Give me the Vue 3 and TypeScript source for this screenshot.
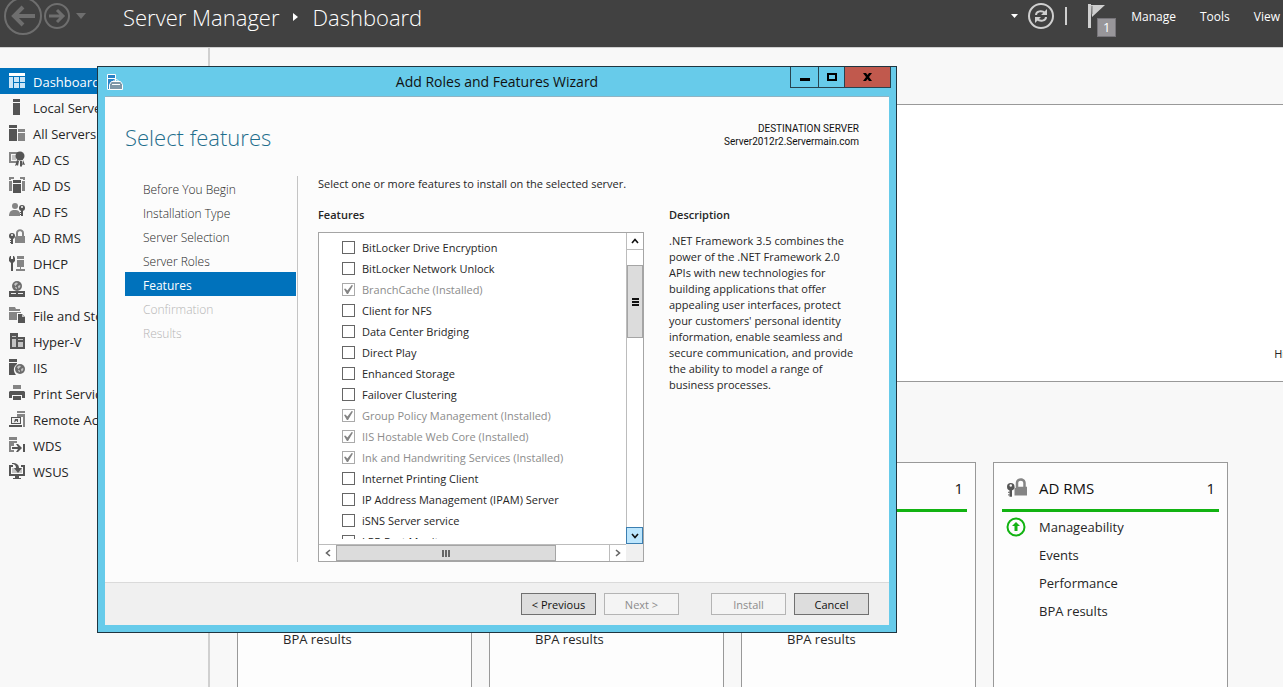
<script setup lang="ts">
import { ref } from 'vue'

type Shape = [path: string, fill: string]

const DARK = '#555555'
const MID = '#858585'
const SOFT = '#c4c4c4'
const BASE = '#f8f8f8'

const box = (x: number, y: number, w: number, h: number): string => `M${x} ${y}h${w}v${h}h${-w}z`
const disc = (cx: number, cy: number, r: number): string =>
  `M${cx - r} ${cy}a${r} ${r} 0 1 0 ${2 * r} 0a${r} ${r} 0 1 0 ${-2 * r} 0z`
const globe = (cx: number, cy: number, r: number): Shape[] => [
  [disc(cx, cy, r), '#6c6c6c'],
  [`M${cx - 3} ${cy - 2}l2-1.500 2 .5-1 1.500 -1 .5-.5 1.500z`, SOFT],
  [`M${cx + 1} ${cy}l2-1 .5 1-1 2-1 .5z`, SOFT],
  [`M${cx - 2} ${cy + 1}h1.500l.5 2-1 0z`, SOFT],
]
const key = (cx: number, cy: number): Shape[] => [
  [disc(cx, cy, 3), DARK],
  [box(cx - 1, cy, 2, 8), DARK],
  [box(cx - 2, cy + 4, 1, 1) + box(cx - 2, cy + 6, 1, 1), DARK],
  [disc(cx, cy - 1, 1), BASE],
]

const icons: Record<string, Shape[]> = {
  dashboard: [
    [box(0, 0, 16, 3), '#ffffff'],
    [box(0, 4, 4, 11) + box(5, 4, 5, 5) + box(11, 4, 5, 5) + box(5, 10, 5, 5) + box(11, 10, 5, 5), '#cbe5f7'],
  ],
  server: [[box(4, 0, 7, 3) + box(4, 4, 7, 12), DARK]],
  servers: [
    [box(0, 0, 8, 3) + box(0, 4, 8, 12), DARK],
    [box(9, 4, 7, 3) + box(9, 8, 7, 8), MID],
  ],
  adcs: [
    ['M0 1h9v2H2v7h6v2H0z', MID],
    [box(3, 4, 4, 5), SOFT],
    [disc(11, 5, 4.5), DARK],
    ['M8 9l2 1-1 5-1-1-2 1zM11 10h2v6l-1-1-1 1zM14 9l2 5-2-.5-1 1z', DARK],
  ],
  adds: [
    ['M0 0h5v2H2v1H0zM11 0h5v3h-2V2h-3zM0 4h3v10H0zM13 4h3v10h-3z', MID],
    [box(4, 3, 8, 3) + box(4, 7, 8, 9), DARK],
  ],
  adfs: [
    [disc(6, 3, 3), MID],
    ['M0 13c0-4 2-6 5-6h2c2 0 3 1 4 3v3z', MID],
    ...key(13, 5),
  ],
  adrms: [
    ['M7 8V4c0-5 8-5 8 0v3h1v7H6V7zM9 7h4V4c0-2.500-4-2.500-4 0z', MID],
    ...key(3, 7),
  ],
  dhcp: [
    ['M1 1l1 0v3h2V1h1l1 2v3L4 8v8H2V8L0 6V3z', DARK],
    [box(8, 1, 7, 3) + box(8, 5, 7, 7) + box(11, 12, 1, 2) + box(7, 14, 9, 2), MID],
  ],
  dns: [
    ...globe(8, 5, 5),
    [box(0, 10, 16, 6), DARK],
    [box(2, 12, 5, 1) + box(9, 12, 5, 1), '#eeeeee'],
  ],
  files: [
    ['M0 0h6l1 2h4v2H0zM0 5h12v1H8v7H0z', MID],
    ['M9 7h4l3 3v6H9z', DARK],
    ['M13 7v3h3z', SOFT],
  ],
  hyperv: [
    ['M1 0h8v4h7v12H1z', DARK],
    [box(3, 3, 4, 1) + box(3, 6, 4, 8) + box(9, 6, 5, 1) + box(9, 9, 5, 5), SOFT],
  ],
  iis: [
    [box(0, 0, 8, 3) + 'M0 4h8v1c-4 3-4 7-1 11H0z', DARK],
    ...globe(11, 10, 5),
  ],
  print: [
    [box(4, 0, 8, 4), MID],
    ['M1 6h14l1 1v6h-3v-3H3v3H0V7z', DARK],
    [box(4, 11, 8, 4), DARK],
  ],
  remote: [
    ['M8 0h8v2H8zM8 3h8v13h-2V6H8z', MID],
    ['M2 6h10v7H2zM0 14h13v2H0z', DARK],
    [box(3, 7, 8, 5), '#eeeeee'],
    ['M6 8h3v3H8V9.500l-3 2z', DARK],
  ],
  wds: [
    [box(0, 0, 8, 3) + 'M0 4h8v2H5v3H2v4h3v2H0z', MID],
    ['M3 10h6L7 7h2l4 4-4 4H7l2-3H3zM14 7h2v8h-2z', DARK],
  ],
  wsus: [
    ['M0 2h4v2H2v7h12V4h-2V2h4v11h-6v2h2v1H4v-1h2v-2H0z', DARK],
    [box(3, 5, 10, 5), SOFT],
    ['M3 0c5 0 7 2 7 5h3l-4 5-4-5h2c0-2-1-4-4-4z', DARK],
  ],
}

const sections = [
  { label: 'Dashboard', icon: 'dashboard' },
  { label: 'Local Server', icon: 'server' },
  { label: 'All Servers', icon: 'servers' },
  { label: 'AD CS', icon: 'adcs' },
  { label: 'AD DS', icon: 'adds' },
  { label: 'AD FS', icon: 'adfs' },
  { label: 'AD RMS', icon: 'adrms' },
  { label: 'DHCP', icon: 'dhcp' },
  { label: 'DNS', icon: 'dns' },
  { label: 'File and Storage Services', icon: 'files' },
  { label: 'Hyper-V', icon: 'hyperv' },
  { label: 'IIS', icon: 'iis' },
  { label: 'Print Services', icon: 'print' },
  { label: 'Remote Access', icon: 'remote' },
  { label: 'WDS', icon: 'wds' },
  { label: 'WSUS', icon: 'wsus' },
]

const fullRows = ['Manageability', 'Events', 'Services', 'Performance', 'BPA results']
const tiles = [
  { title: 'AD CS', icon: 'adcs', rows: fullRows },
  { title: 'AD DS', icon: 'adds', rows: fullRows },
  { title: 'AD FS', icon: 'adfs', rows: fullRows },
  { title: 'AD RMS', icon: 'adrms', rows: fullRows.filter((r) => r !== 'Services') },
]

const steps = [
  { label: 'Before You Begin', state: 'done' },
  { label: 'Installation Type', state: 'done' },
  { label: 'Server Selection', state: 'done' },
  { label: 'Server Roles', state: 'done' },
  { label: 'Features', state: 'current' },
  { label: 'Confirmation', state: 'pending' },
  { label: 'Results', state: 'pending' },
]

const features = ref([
  { label: 'BitLocker Drive Encryption', installed: false, checked: false },
  { label: 'BitLocker Network Unlock', installed: false, checked: false },
  { label: 'BranchCache (Installed)', installed: true, checked: true },
  { label: 'Client for NFS', installed: false, checked: false },
  { label: 'Data Center Bridging', installed: false, checked: false },
  { label: 'Direct Play', installed: false, checked: false },
  { label: 'Enhanced Storage', installed: false, checked: false },
  { label: 'Failover Clustering', installed: false, checked: false },
  { label: 'Group Policy Management (Installed)', installed: true, checked: true },
  { label: 'IIS Hostable Web Core (Installed)', installed: true, checked: true },
  { label: 'Ink and Handwriting Services (Installed)', installed: true, checked: true },
  { label: 'Internet Printing Client', installed: false, checked: false },
  { label: 'IP Address Management (IPAM) Server', installed: false, checked: false },
  { label: 'iSNS Server service', installed: false, checked: false },
  { label: 'LPR Port Monitor', installed: false, checked: false },
])
</script>

<template>
  <div class="app">
    <header class="topbar">
      <button class="plain" aria-label="Back">
        <svg width="38" height="38" viewBox="0 0 38 38" fill="none" stroke="#6e6e6e">
          <circle cx="19" cy="19" r="18" stroke-width="2" />
          <path d="M31 19H10M19 10l-9 9 9 9" stroke-width="4" />
        </svg>
      </button>
      <button class="plain" aria-label="Forward">
        <svg width="26" height="26" viewBox="0 0 26 26" fill="none" stroke="#6e6e6e">
          <circle cx="13" cy="13" r="12" stroke-width="2" />
          <path d="M5 13h14M13 7l6 6-6 6" stroke-width="3" />
        </svg>
      </button>
      <button class="plain history" aria-label="History">
        <svg width="10" height="6" viewBox="0 0 10 6"><path d="M0 0h10L5 6z" fill="#6e6e6e" /></svg>
      </button>
      <h1 class="crumbs">
        <span>Server Manager</span>
        <svg width="5" height="8" viewBox="0 0 5 8"><path d="M0 0l5 4-5 4z" fill="#fff" /></svg>
        <span>Dashboard</span>
      </h1>
      <div class="tools">
        <button class="plain" aria-label="Options">
          <svg width="7" height="4" viewBox="0 0 7 4"><path d="M0 0h7L3.500 4z" fill="#fff" /></svg>
        </button>
        <button class="plain refresh" aria-label="Refresh">
          <svg width="26" height="26" viewBox="0 0 26 26" fill="none" stroke="#cfcfcf">
            <circle cx="13" cy="13" r="12" stroke-width="2" />
            <path d="M8 12c0-4 6-5 9-2M18 14c0 4-6 5-9 2" stroke-width="2" />
            <path d="M19 6v6h-6zM7 20v-6h6z" fill="#cfcfcf" stroke="none" />
          </svg>
        </button>
        <span class="bar"></span>
        <button class="plain flag" aria-label="Notifications">
          <svg width="17" height="24" viewBox="0 0 17 24">
            <path d="M0 0h3v24H0zM3 1h14L4 13z" fill="#cfcfcf" />
            <path d="M4 2v8" stroke="#777" stroke-width="1" />
          </svg>
          <span class="badge">1</span>
        </button>
        <button class="plain menu manage">Manage</button>
        <button class="plain menu">Tools</button>
        <button class="plain menu">View</button>
      </div>
    </header>

    <div class="body">
      <nav class="sidebar" aria-label="Server groups">
        <a v-for="(s, i) in sections" :key="s.label" href="#" :class="{ active: i === 0 }">
          <svg width="16" height="16" viewBox="0 0 16 16" fill-rule="evenodd">
            <path v-for="(p, n) in icons[s.icon]" :key="n" :d="p[0]" :fill="p[1]" />
          </svg>
          <span>{{ s.label }}</span>
        </a>
      </nav>

      <main class="main">
        <section class="hero"><button class="plain hide">Hide</button></section>
        <section class="tiles">
          <article v-for="t in tiles" :key="t.title" class="tile">
            <header>
              <svg width="20" height="20" viewBox="0 0 16 16" fill-rule="evenodd">
                <path v-for="(p, n) in icons[t.icon]" :key="n" :d="p[0]" :fill="p[1]" />
              </svg>
              <h2>{{ t.title }}</h2>
              <span>1</span>
            </header>
            <ul>
              <li v-for="(r, n) in t.rows" :key="r">
                <svg v-if="n === 0" width="20" height="20" viewBox="0 0 20 20">
                  <circle cx="10" cy="10" r="8.500" fill="none" stroke="#12b312" stroke-width="2" />
                  <path d="M10 5l4 4h-2.500v5h-3V9H6z" fill="#12b312" />
                </svg>
                <a href="#">{{ r }}</a>
              </li>
            </ul>
          </article>
        </section>
      </main>
    </div>

    <div class="dialog" role="dialog" aria-labelledby="wizard-title">
      <div class="titlebar">
        <svg width="16" height="16" viewBox="0 0 16 16">
          <path d="M.5.5h8v4h-8zM.5 4.500h8v11h-8z" fill="#2a83c6" stroke="#fff" />
          <path d="M2.500 15.500v-5l2-3h9l2 3v5z" fill="#7f98a8" stroke="#fff" />
          <path d="M6.500 7.500c0-2.500 5-2.500 5 0M5 10.500h8" fill="none" stroke="#fff" />
        </svg>
        <span id="wizard-title">Add Roles and Features Wizard</span>
        <div class="winbtns">
          <button aria-label="Minimize">
            <svg width="10" height="8" viewBox="0 0 10 8"><path d="M0 5h10v3H0z" /></svg>
          </button>
          <button aria-label="Maximize">
            <svg width="10" height="8" viewBox="0 0 10 8"><path d="M1 1h8v6H1z" fill="none" stroke="#000" stroke-width="2" /></svg>
          </button>
          <button class="close" aria-label="Close">
            <svg width="9" height="8" viewBox="0 0 9 8"><path d="M0 0h3l1.500 2L6 0h3L6 4l3 4H6L4.500 6 3 8H0l3-4z" /></svg>
          </button>
        </div>
      </div>

      <div class="client">
        <div class="heading">
          <h2>Select features</h2>
          <p>DESTINATION SERVER<br />Server2012r2.Servermain.com</p>
        </div>
        <div class="content">
          <ol class="steps">
            <li v-for="s in steps" :key="s.label" :class="s.state">{{ s.label }}</li>
          </ol>
          <div class="pane">
            <p class="intro">Select one or more features to install on the selected server.</p>
            <div class="columns">
              <section class="featurecol">
                <h3>Features</h3>
                <div class="listbox">
                  <div class="items">
                    <label v-for="f in features" :key="f.label" :class="{ installed: f.installed }">
                      <input v-model="f.checked" type="checkbox" :disabled="f.installed" />
                      <span>{{ f.label }}</span>
                    </label>
                  </div>
                  <div class="vscroll">
                    <button aria-label="Scroll up">
                      <svg width="8" height="6" viewBox="0 0 8 6"><path d="M1 5l3-3.500L7 5" /></svg>
                    </button>
                    <div class="vthumb"><i></i><i></i><i></i></div>
                    <button class="hot" aria-label="Scroll down">
                      <svg width="8" height="6" viewBox="0 0 8 6"><path d="M1 1l3 3.500L7 1" /></svg>
                    </button>
                  </div>
                  <div class="hscroll">
                    <button aria-label="Scroll left">
                      <svg width="6" height="8" viewBox="0 0 6 8"><path d="M5 1L1.500 4 5 7" /></svg>
                    </button>
                    <div class="hthumb"><i></i><i></i><i></i></div>
                    <button aria-label="Scroll right">
                      <svg width="6" height="8" viewBox="0 0 6 8"><path d="M1 1l3.500 3L1 7" /></svg>
                    </button>
                  </div>
                  <div class="corner"></div>
                </div>
              </section>
              <section class="description">
                <h3>Description</h3>
                <p>
                  .NET Framework 3.5 combines the<br />power of the .NET Framework 2.0<br />APIs with new
                  technologies for<br />building applications that offer<br />appealing user interfaces,
                  protect<br />your customers' personal identity<br />information, enable seamless and<br />secure
                  communication, and provide<br />the ability to model a range of<br />business processes.
                </p>
              </section>
            </div>
          </div>
        </div>
        <footer class="actions">
          <button>&lt; Previous</button>
          <button disabled>Next &gt;</button>
          <button class="install" disabled>Install</button>
          <button>Cancel</button>
        </footer>
      </div>
    </div>
  </div>
</template>

<style>
body {
  overflow: hidden;
}
</style>

<style scoped>
.app {
  position: relative;
  display: flex;
  flex-direction: column;
  height: 100vh;
  overflow: hidden;
  background: #f8f8f8;
  color: #262626;
  font-family: 'Open Sans', 'Noto Sans', sans-serif;
  font-size: 11px;
}
.app *,
.app *::before {
  box-sizing: border-box;
}
h1,
h2,
h3,
p,
ul,
ol {
  margin: 0;
  padding: 0;
  font-weight: 400;
  list-style: none;
}
button {
  font-family: inherit;
  font-size: 11px;
  padding: 0;
}
svg {
  display: block;
  flex: none;
}
a {
  color: inherit;
  text-decoration: none;
}
.plain {
  border: 0;
  background: none;
  color: inherit;
}

.topbar {
  flex: none;
  display: flex;
  align-items: center;
  height: 48px;
  padding: 0 3px 15px 4px;
  background: #414141;
  border-bottom: 1px solid #d0d0d0;
  color: #fff;
}
.topbar > .plain + .plain {
  margin-left: 2px;
}
.topbar > .plain + .history {
  margin-left: 6px;
}
.crumbs {
  display: flex;
  align-items: center;
  gap: 14px;
  margin-left: 37px;
  padding-top: 2px;
  font-size: 22px;
  line-height: 28px;
  font-weight: 300;
  white-space: nowrap;
}
.tools {
  display: flex;
  align-items: center;
  margin-left: auto;
}
.refresh {
  margin: 0 11px 0 10px;
}
.bar {
  width: 2px;
  height: 18px;
  background: #cfcfcf;
}
.flag {
  position: relative;
  width: 28px;
  height: 24px;
  margin-left: 21px;
}
.badge {
  position: absolute;
  left: 9px;
  top: 14px;
  width: 19px;
  height: 19px;
  background: #98969a;
  border: 1px solid #77757a;
  font-size: 13px;
  line-height: 17px;
  text-align: center;
}
.menu {
  padding-top: 2px;
  font-size: 12px;
  line-height: 16px;
  margin-left: 24px;
}
.manage {
  margin-left: 15px;
}

.body {
  flex: 1;
  display: flex;
  min-height: 0;
}
.sidebar {
  flex: none;
  width: 210px;
  padding-top: 20px;
  border-right: 2px solid #d0d0d0;
}
.sidebar a {
  display: flex;
  align-items: center;
  gap: 8px;
  height: 26px;
  padding-left: 9px;
  font-size: 13px;
  white-space: nowrap;
}
.sidebar span {
  padding-top: 2px;
}
.sidebar a.active {
  background: #0072bc;
  color: #fff;
}
.main {
  flex: 1;
  min-width: 0;
  overflow: hidden;
  padding: 56px 0 0 27px;
}
.hero {
  display: flex;
  align-items: flex-end;
  justify-content: flex-end;
  height: 278px;
  margin-right: -24px;
  padding: 0 8px 20px;
  background: #fff;
  border: 1px solid #999;
}
.tiles {
  display: grid;
  grid-template-columns: repeat(4, 235px);
  gap: 17px;
  margin-top: 80px;
}
.tile {
  height: 260px;
  padding: 0 8px;
  background: #fdfdfd;
  border: 1px solid #999;
}
.tile header {
  display: flex;
  align-items: center;
  height: 49px;
  padding: 3px 4px 0 5px;
  border-bottom: 3px solid #12b312;
  color: #111;
  font-size: 15px;
}
.tile h2 {
  flex: 1;
  margin-left: 12px;
  font-size: 15px;
}
.tile ul {
  padding-top: 1px;
}
.tile li {
  display: flex;
  align-items: center;
  height: 28px;
  font-size: 13px;
}
.tile li svg {
  margin: 0 -24px 0 4px;
}
.tile li a {
  margin-left: 37px;
}

.dialog {
  position: absolute;
  left: 97px;
  top: 66px;
  width: 800px;
  padding: 0 7px 7px;
  background: #67cbea;
  border: 1px solid #1f3540;
}
.titlebar {
  display: grid;
  grid-template-columns: 99px 1fr 99px;
  height: 29px;
}
.titlebar > svg {
  margin: 7px 0 0 2px;
}
.titlebar > span {
  text-align: center;
  font-size: 14px;
  line-height: 29px;
  color: #111;
}
.winbtns {
  display: flex;
  height: 21px;
  margin-right: -2px;
  border: 1px solid #27434f;
  border-top: 0;
}
.winbtns button {
  display: grid;
  place-items: center;
  width: 28px;
  border: 0;
  border-right: 1px solid #27434f;
  background: none;
}
.winbtns button:nth-child(2) {
  width: 26px;
}
.winbtns .close {
  flex: 1;
  border-right: 0;
  background: #c1594d;
}
.client {
  background: #fcfcfc;
  border-top: 1px solid #8fb4c4;
}
.heading {
  display: flex;
  justify-content: space-between;
  align-items: flex-start;
  padding: 22px 30px 0 20px;
}
.heading h2 {
  font-size: 22px;
  line-height: 36px;
  font-weight: 300;
  color: #1f6e8c;
}
.heading p {
  padding-top: 3px;
  font-family: Roboto, 'Open Sans', sans-serif;
  font-size: 10px;
  line-height: 13px;
  text-align: right;
  color: #111;
}
.content {
  display: flex;
  margin-top: 21px;
  padding-left: 20px;
}
.steps {
  flex: none;
  width: 173px;
  height: 386px;
  padding-right: 1px;
  border-right: 1px solid #c4c4c4;
}
.steps li {
  height: 24px;
  padding-left: 18px;
  font-size: 12px;
  line-height: 27px;
  font-weight: 300;
}
.steps .current {
  background: #0072bc;
  color: #fff;
  font-weight: 400;
}
.steps .pending {
  color: #b5b5b5;
}
.pane {
  flex: 1;
  padding-left: 20px;
}
.intro {
  line-height: 16px;
}
.columns {
  display: flex;
  gap: 25px;
  margin-top: 15px;
}
.columns h3 {
  font-size: 11px;
  line-height: 16px;
  font-weight: 600;
}
.featurecol {
  flex: none;
  width: 326px;
}
.listbox {
  display: grid;
  grid-template-columns: 1fr 17px;
  grid-template-rows: 311px 17px;
  margin-top: 9px;
  background: #fff;
  border: 1px solid #a5a5a5;
}
.items {
  height: 306px;
  padding: 4px 0 0 23px;
  overflow: hidden;
}
.items label {
  display: flex;
  align-items: center;
  gap: 7px;
  height: 21px;
  white-space: nowrap;
}
.items .installed {
  color: #8c8c8c;
}
input[type='checkbox'] {
  appearance: none;
  display: block;
  width: 13px;
  height: 13px;
  margin: 0;
  border: 1px solid #666;
  background: #fff;
}
input[type='checkbox']:disabled {
  border-color: #aaa;
}
input[type='checkbox']:checked::before {
  content: '';
  display: block;
  width: 9px;
  height: 9px;
  margin: 1px;
  background: #858585;
  clip-path: polygon(0 45%, 15% 38%, 38% 62%, 85% 0, 100% 5%, 45% 100%, 32% 100%);
}
.vscroll {
  display: flex;
  flex-direction: column;
  border-left: 1px solid #bcbcbc;
}
.vscroll button,
.hscroll button {
  display: grid;
  place-items: center;
  flex: none;
  background: #fff;
  border: 0;
}
.vscroll button {
  height: 17px;
  border-bottom: 1px solid #bcbcbc;
}
.vscroll .hot {
  width: 17px;
  margin: auto 0 0 -1px;
  background: #bde6fd;
  border: 1px solid #3c7fb1;
}
.vscroll path,
.hscroll path {
  fill: none;
  stroke: #111;
  stroke-width: 1.6;
}
.hscroll path {
  stroke: #666;
}
.vthumb,
.hthumb {
  display: flex;
  align-items: center;
  justify-content: center;
  gap: 1px;
  background: #dcdcdc;
  border: 1px solid #a5a5a5;
}
.vthumb {
  flex-direction: column;
  height: 73px;
  margin-top: 15px;
}
.vthumb i {
  width: 7px;
  height: 2px;
  background: #111;
}
.hscroll {
  display: flex;
  border-top: 1px solid #bcbcbc;
}
.hscroll button {
  width: 17px;
}
.hscroll button:last-child {
  margin-left: auto;
  border-left: 1px solid #bcbcbc;
}
.hthumb {
  width: 220px;
}
.hthumb i {
  width: 2px;
  height: 7px;
  background: #666;
}
.corner {
  background: #f0f0f0;
}
.description p {
  margin-top: 10px;
  line-height: 16px;
  white-space: nowrap;
}
.actions {
  display: flex;
  justify-content: flex-end;
  gap: 8px;
  margin-top: 20px;
  padding: 10px 20px;
  background: #f0f0f0;
  border-top: 1px solid #dadada;
}
.actions button {
  width: 75px;
  height: 22px;
  background: #dddddd;
  border: 1px solid #707070;
  color: #111;
}
.actions button:disabled {
  background: #f4f4f4;
  border-color: #b4b4b4;
  color: #8c8c8c;
}
.actions .install {
  margin-left: 24px;
}
</style>
